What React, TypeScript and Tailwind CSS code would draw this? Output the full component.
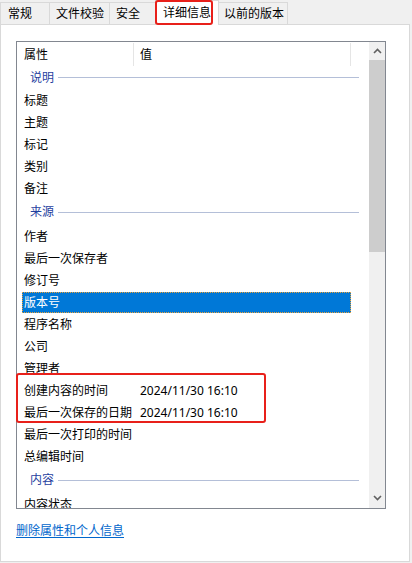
import React from 'react';

const tabs = [
  { label: '常规', w: 'w-[50px]', pl: 'pl-[7px]' },
  { label: '文件校验', w: 'w-[61px]', pl: 'pl-[6px]' },
  { label: '安全', w: 'w-[47px]', pl: 'pl-[6px]' },
  { label: '详细信息', w: 'w-[64px]', pl: 'pl-[7px]', active: true },
  { label: '以前的版本', w: 'w-[70px]', pl: 'pl-[5px]' },
];

type Item = { group?: boolean; first?: boolean; name: string; value?: string; selected?: boolean };

const items: Item[] = [
  { group: true, first: true, name: '说明' },
  { name: '标题' },
  { name: '主题' },
  { name: '标记' },
  { name: '类别' },
  { name: '备注' },
  { group: true, name: '来源' },
  { name: '作者' },
  { name: '最后一次保存者' },
  { name: '修订号' },
  { name: '版本号', selected: true },
  { name: '程序名称' },
  { name: '公司' },
  { name: '管理者' },
  { name: '创建内容的时间', value: '2024/11/30 16:10' },
  { name: '最后一次保存的日期', value: '2024/11/30 16:10' },
  { name: '最后一次打印的时间' },
  { name: '总编辑时间' },
  { group: true, name: '内容' },
  { name: '内容状态' },
];

const Chevron = ({ down }: { down?: boolean }) => (
  <svg width="9" height="6" viewBox="0 0 9 6" className={down ? 'rotate-180' : ''}>
    <path d="M1 5 L4.5 1.5 L8 5" fill="none" stroke="#606060" strokeWidth="1.6" />
  </svg>
);

const App = () => {
  return (
    <div
      className="relative w-[412px] h-[563px] bg-[#f0f0f0] text-[12px] text-black overflow-hidden"
      style={{ fontFamily: "'Noto Sans', 'Noto Sans CJK SC', sans-serif" }}
    >
      {/* tabs */}
      <div className="flex items-end h-[25px]">
        {tabs.map((t, i) => (
          <div
            key={t.label}
            className={`${t.w} ${t.pl} ${i > 0 ? '-ml-px' : ''} border border-b-0 ${
              t.active
                ? 'relative z-10 h-[25px] bg-white border-[#d9d9d9] pt-[3px] leading-[18px]'
                : 'h-[23px] bg-[#f0f0f0] border-[#d9d9d9] leading-[22px]'
            } whitespace-nowrap`}
          >
            {t.label}
          </div>
        ))}
      </div>

      {/* panel */}
      <div className="relative z-0 -mt-px w-[410px] h-[538px] bg-white border border-[#d9d9d9] pt-[16px] pl-[15px]">
        <div className="w-[370px] h-[468px] border border-[#828790] flex overflow-hidden">
          <div className="w-[352px] h-[466px] overflow-hidden">
            {/* header */}
            <div className="flex h-[24px] items-center">
              <div className="w-[116px] pl-[7px] pt-[1px] leading-[22px]">属性</div>
              <div className="w-px h-[23px] self-end bg-[#e5e5e5]" />
              <div className="w-[216px] pl-[6px] pt-[1px] leading-[22px]">值</div>
              <div className="w-px h-[23px] self-end bg-[#e5e5e5]" />
            </div>

            {items.map((it) =>
              it.group ? (
                <div
                  key={it.name}
                  className={`flex items-center ${it.first ? 'h-[23px]' : 'h-[26px]'} pl-[13px]`}
                >
                  <span className="text-[#1f3f9f] leading-[16px]">{it.name}</span>
                  <div className="ml-[4px] w-[301px] h-px bg-[#b4bfd8]" />
                </div>
              ) : (
                <div key={it.name} className="h-[22px] pl-[5px] pt-[1px]">
                  <div
                    className={`flex items-center w-[329px] h-[21px] leading-[21px] ${
                      it.selected ? 'bg-[#0078d7] text-white outline outline-1 outline-dotted outline-[#e9a33c] -outline-offset-1' : ''
                    }`}
                  >
                    <div className="w-[118px] pl-[2px] whitespace-nowrap">{it.name}</div>
                    {it.value && <div className="whitespace-nowrap">{it.value}</div>}
                  </div>
                </div>
              )
            )}
          </div>

          {/* scrollbar */}
          <div className="w-[16px] h-[466px] bg-[#f0f0f0] flex flex-col">
            <div className="h-[18px] flex items-center justify-center">
              <Chevron />
            </div>
            <div className="h-[192px] bg-[#cdcdcd]" />
            <div className="flex-1" />
            <div className="h-[18px] flex items-center justify-center mb-[1px]">
              <Chevron down />
            </div>
          </div>
        </div>

        <div className="mt-[14px] leading-[16px]">
          <span className="text-[#0066cc] underline underline-offset-2">删除属性和个人信息</span>
        </div>
      </div>

      {/* annotation boxes */}
      <div className="absolute left-[155px] top-0 w-[58px] h-[25px] border-2 border-[#e8201a] rounded-[3px] z-20" />
      <div className="absolute left-[16px] top-[373px] w-[250px] h-[50px] border-2 border-[#e8201a] rounded-[3px] z-20" />
    </div>
  );
};

export default App;
